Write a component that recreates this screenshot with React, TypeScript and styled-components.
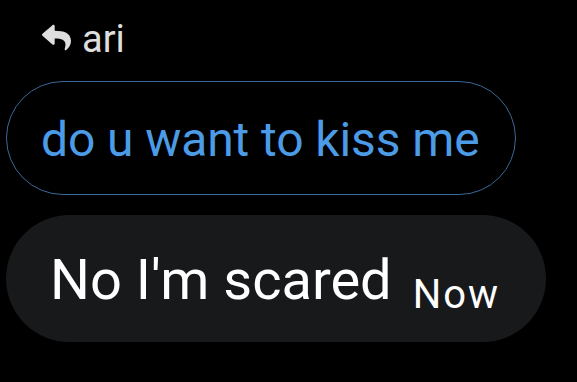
import React from "react";
import styled, { createGlobalStyle } from "styled-components";
import { FaReply } from "react-icons/fa";

const Global = createGlobalStyle`
  html, body {
    margin: 0;
    padding: 0;
    background: #000;
  }
  body {
    width: 577px;
    height: 382px;
    overflow: hidden;
    font-family: Roboto, "Noto Sans", "Liberation Sans", sans-serif;
  }
`;

const Page = styled.div`
  display: flex;
  flex-direction: column;
  align-items: flex-start;
  padding: 20px 0 0 6px;
`;

const ReplyHeader = styled.div`
  display: flex;
  align-items: center;
  gap: 11px;
  padding-left: 36px;
  height: 38px;
  color: #dedede;
  font-size: 38px;
  line-height: 38px;
`;

const ReplyIcon = styled(FaReply)`
  flex: none;
  margin-top: -3px;
`;

const QuoteBubble = styled.div`
  box-sizing: border-box;
  margin-top: 23px;
  width: 510px;
  height: 114px;
  border: 1.5px solid #3a6898;
  border-radius: 57px;
  display: flex;
  align-items: center;
  padding: 3px 0 0 34px;
  color: #4c9be6;
  font-size: 48px;
  line-height: 48px;
  letter-spacing: -0.1px;
`;

const MessageBubble = styled.div`
  box-sizing: border-box;
  margin-top: 20px;
  width: 540px;
  height: 127px;
  border-radius: 64px;
  background: #18191b;
  display: flex;
  align-items: center;
  padding: 2px 0 0 44px;
  color: #fff;
`;

const MessageText = styled.div`
  font-size: 56px;
  line-height: 56px;
  white-space: nowrap;
`;

const Time = styled.span`
  font-size: 40px;
  line-height: 0;
  letter-spacing: 2px;
  margin-left: 21px;
  vertical-align: -9px;
`;

export default function App() {
  return (
    <>
      <Global />
      <Page>
        <ReplyHeader>
          <ReplyIcon size={29} />
          <span>ari</span>
        </ReplyHeader>
        <QuoteBubble>do u want to kiss me</QuoteBubble>
        <MessageBubble>
          <MessageText>
            No I'm scared<Time>Now</Time>
          </MessageText>
        </MessageBubble>
      </Page>
    </>
  );
}
